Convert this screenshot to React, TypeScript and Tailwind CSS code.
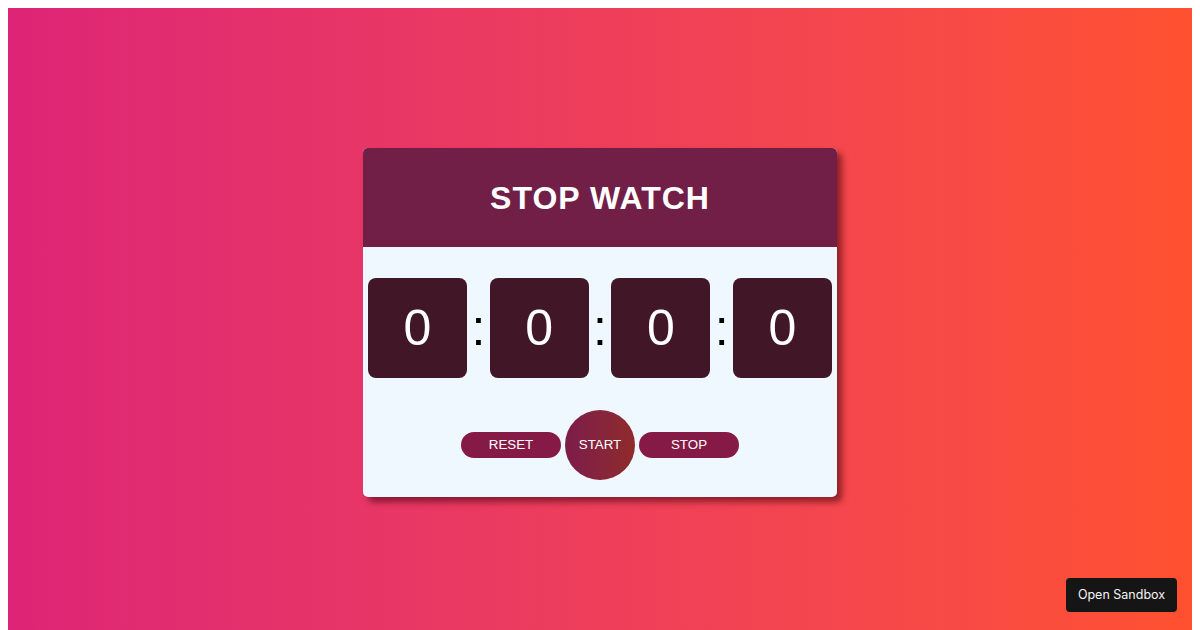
import React from "react";

export default function App() {
  const digits = ["0", "0", "0", "0"];
  return (
    <div className="bg-white px-2 pt-2" style={{ fontFamily: '"Liberation Sans", Arial, sans-serif' }}>
      <div className="flex h-[629px] w-full items-center justify-center bg-gradient-to-r from-[#dd2476] to-[#ff512f]">
        <div className="w-[474px] overflow-hidden rounded-[5px] bg-[#f0f8ff] shadow-[5px_5px_6px_rgba(60,0,10,0.55)]">
          <div className="flex h-[99px] items-center justify-center bg-[#721f47]">
            <h1 className="text-[32px] font-bold leading-none tracking-[1px] text-white">STOP WATCH</h1>
          </div>
          <div className="px-[5px] pb-[17px] pt-[31px]">
            <div className="flex items-center justify-between">
              {digits.map((d, i) => (
                <React.Fragment key={i}>
                  {i > 0 && <span className="text-[50px] leading-none text-black">:</span>}
                  <div className="flex h-[100px] w-[99px] items-center justify-center rounded-[8px] bg-[#411727]">
                    <span className="text-[50px] leading-none text-white">{d}</span>
                  </div>
                </React.Fragment>
              ))}
            </div>
            <div className="mt-[32px] flex items-center justify-center gap-[4px]">
              <button className="h-[26px] w-[100px] rounded-full bg-[#861a47] text-[13.33px] text-white">RESET</button>
              <button className="h-[70px] w-[70px] rounded-full bg-gradient-to-r from-[#7c1c4a] to-[#8f2b2a] text-[13.33px] text-white">START</button>
              <button className="h-[26px] w-[100px] rounded-full bg-[#861a47] text-[13.33px] text-white">STOP</button>
            </div>
          </div>
        </div>
      </div>
      <div
        className="fixed bottom-[18px] right-[23px] flex h-[34px] w-[111px] items-center justify-center rounded-[4px] bg-[#151515] text-[12.5px] text-[#f5f5f5]"
        style={{ fontFamily: 'Inter, "Liberation Sans", sans-serif' }}
      >
        Open Sandbox
      </div>
    </div>
  );
}
